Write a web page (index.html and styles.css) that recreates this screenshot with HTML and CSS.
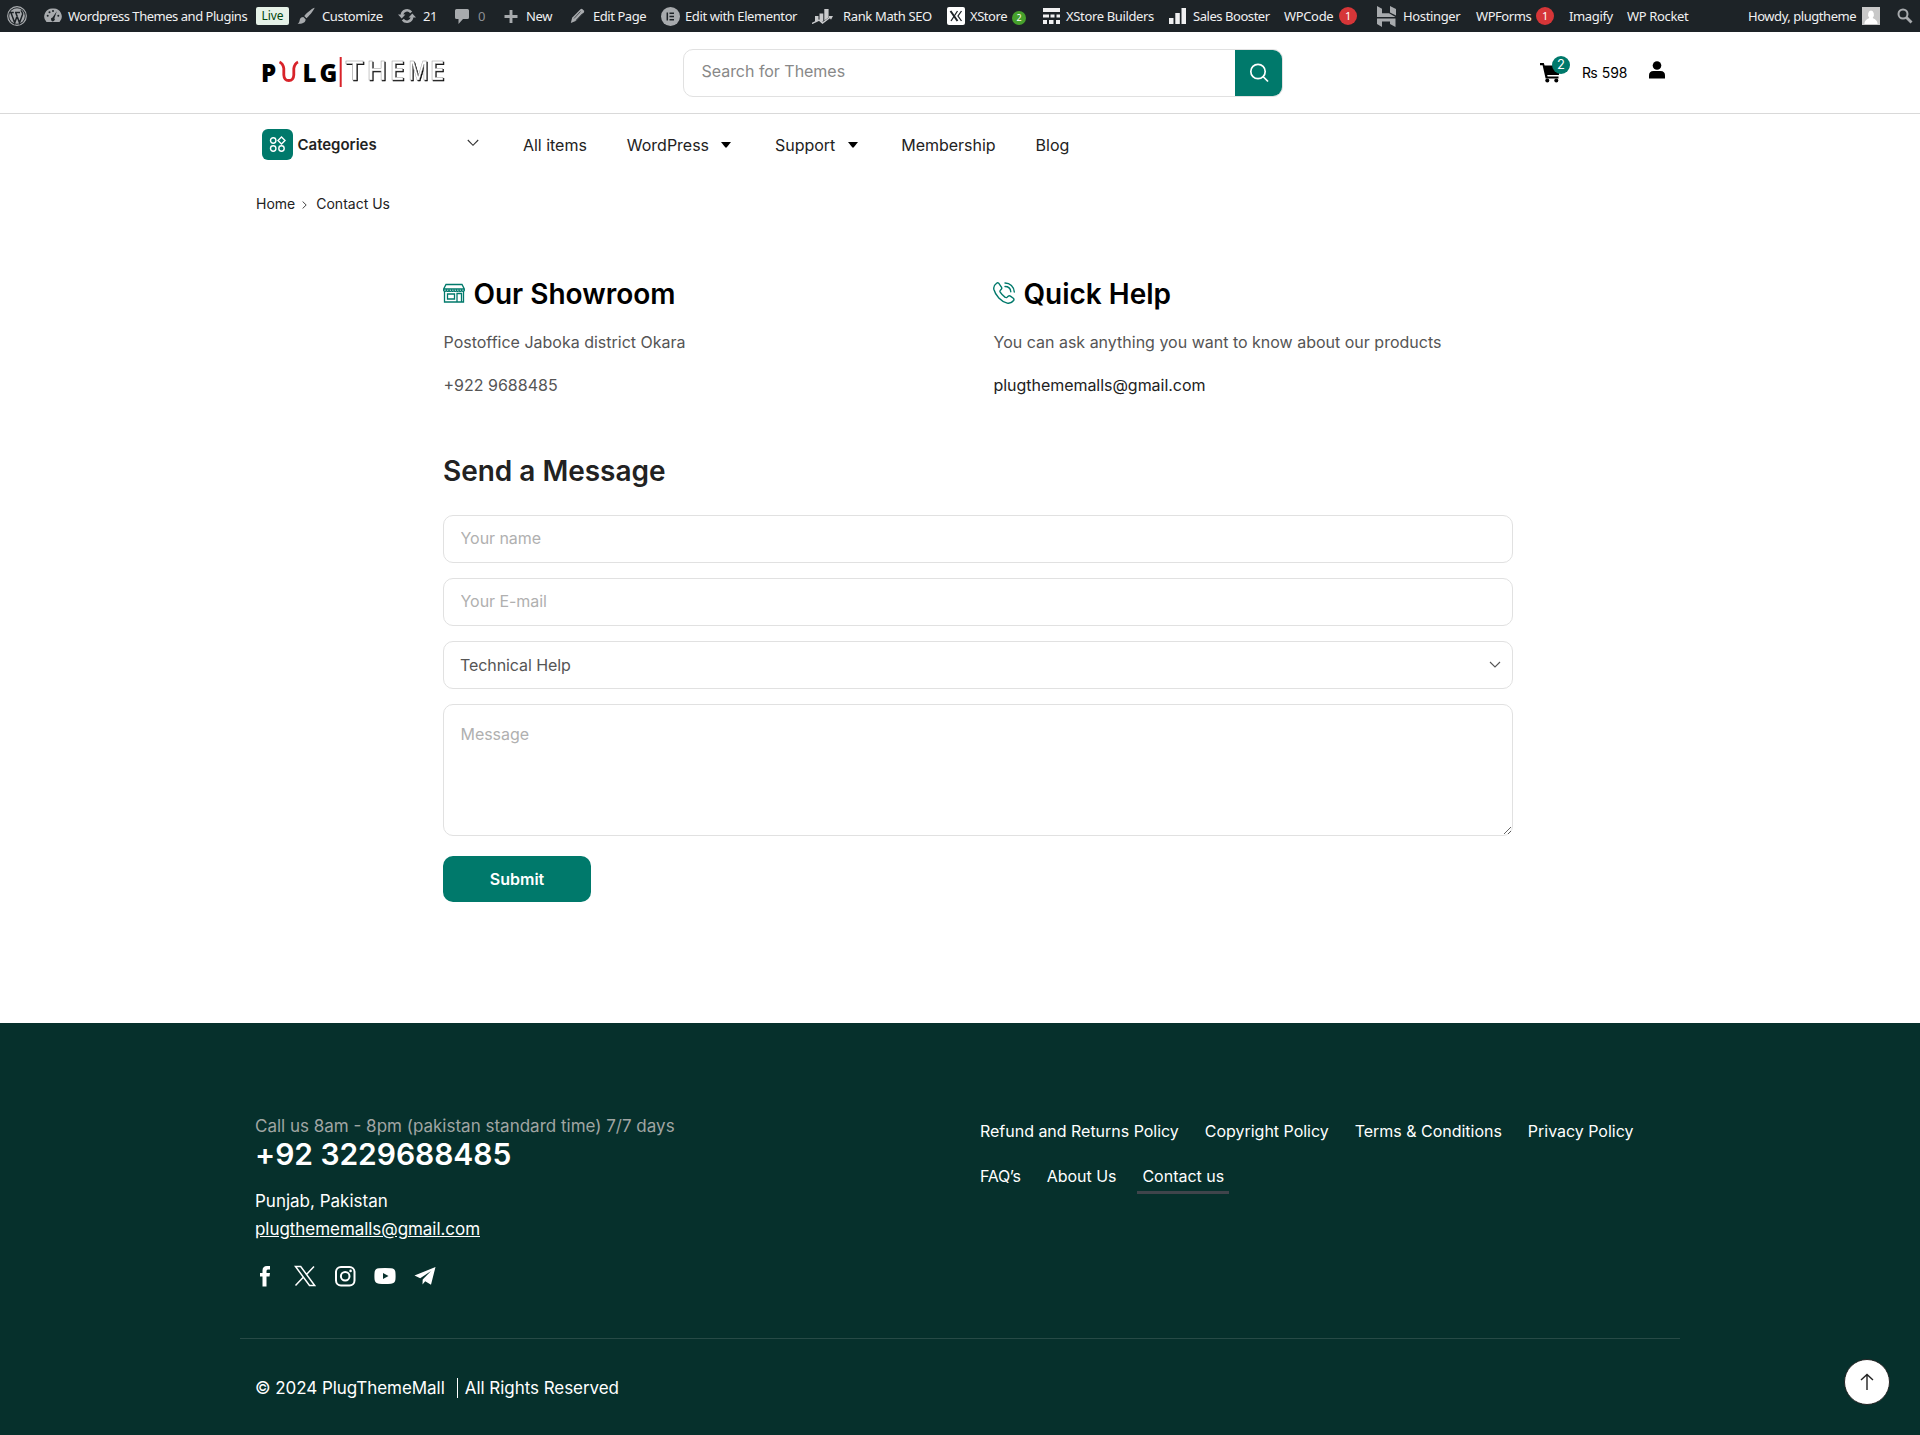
FILE: index.html
```html
<!DOCTYPE html>
<html lang="en">
<head>
<meta charset="utf-8">
<title>Contact Us</title>
<link rel="stylesheet" href="styles.css">
</head>
<body>
<ul class="adminbar">
  <li class="ab ab-wp"><svg width="20" height="20" viewBox="0 0 20 20"><circle cx="10" cy="10" r="9.3" fill="none" stroke="#a7aaad" stroke-width="1.2"/><circle cx="10" cy="10" r="7.8" fill="#a7aaad"/><path d="M2.6 6.6h4.2M8 6.6h5M4 6.8l3.7 10L10.3 9.500M8.800 6.800l3.700 10L15.500 8.500c.6-1.800-1-2.500-1.400-4.200" fill="none" stroke="#1d2327" stroke-width="1.500"/></svg></li>
  <li class="ab ab-site"><svg width="18" height="18" viewBox="0 0 18 18"><path d="M9 1.500A8 8 0 0 0 2.500 15h13A8 8 0 0 0 9 1.500z" fill="#a7aaad"/><g fill="#1d2327"><circle cx="9" cy="4" r="1"/><circle cx="5.500" cy="5.300" r="1"/><circle cx="3.700" cy="8.800" r="1"/><circle cx="14.300" cy="8.800" r="1"/><path d="M12.800 4.300L10.400 11.200a1.900 1.900 0 1 1-1.900-.7z"/></g></svg><span>Wordpress Themes and Plugins</span><b class="live">Live</b></li>
  <li class="ab ab-custom"><svg width="18" height="18" viewBox="0 0 18 18"><path d="M17.500.8c.5.500-3.700 6.800-8 10.500L7.200 9C10.500 5 17 .3 17.500.8zM6.300 9.900l2.300 2.300c.3 3-3 5-8 4.500 2.200-1 1.600-2.500 2.400-4.700.6-1.500 2-2.200 3.300-2.100z" fill="#a7aaad"/></svg><span>Customize</span></li>
  <li class="ab ab-upd"><svg width="18" height="16" viewBox="0 0 18 16"><path d="M3.900 7a5.200 5.200 0 0 1 9.300-2.600M14.100 9a5.200 5.200 0 0 1-9.300 2.600" fill="none" stroke="#a7aaad" stroke-width="2.600"/><path d="M0 6.500h7.400L3.700 10.500zM18 9.500h-7.400l3.700-4z" fill="#a7aaad"/></svg><span>21</span></li>
  <li class="ab ab-com"><svg width="14" height="16" viewBox="0 0 14 16"><path d="M1.500 1h11q1.500 0 1.500 1.500v7q0 1.500-1.500 1.500H8l-4.500 5V11h-2Q0 11 0 9.500v-7Q0 1 1.500 1z" fill="#a7aaad"/></svg><span class="dim">0</span></li>
  <li class="ab ab-new"><svg width="14" height="14" viewBox="0 0 14 14"><path d="M7 1v13M.5 7.500h13" stroke="#a7aaad" stroke-width="2.900"/></svg><span>New</span></li>
  <li class="ab ab-edit"><svg width="15" height="16" viewBox="0 0 15 16"><path d="M10.500 1.200q1-.8 2 .1l1.300 1.300q.9 1 0 2L5.700 13 .8 15l1.300-5.200z" fill="#a7aaad"/><path d="M4 10.500l6.500-7M6 12.300L12.500 5.500" stroke="#1d2327" stroke-width=".7"/></svg><span>Edit Page</span></li>
  <li class="ab ab-elem"><svg width="19" height="19" viewBox="0 0 19 19"><circle cx="9.500" cy="9.500" r="9.500" fill="#a7aaad"/><path d="M6.300 5.500v8M8.500 6.200h4.500M8.500 9.500h4.500M8.500 12.800h4.500" stroke="#1d2327" stroke-width="1.500"/></svg><span>Edit with Elementor</span></li>
  <li class="ab ab-rank"><svg width="21" height="16" viewBox="0 0 21 16"><path d="M3 8h3.500v4.500L3 14zM7.500 5.500h3.800V13L9.500 14.500l-2-2zM12.300 1h4.300v8.500l-4.300 3z" fill="#c9cacc"/><path d="M0 15.500l7-3.500 3.500 3 8-6" fill="none" stroke="#c9cacc" stroke-width="1.400"/><path d="M16.500 8H21l-2 3.800z" fill="#c9cacc"/></svg><span>Rank Math SEO</span></li>
  <li class="ab ab-xs"><svg width="18" height="18" viewBox="0 0 18 18"><rect width="18" height="18" rx="2" fill="#fff"/><path d="M3.500 4l7 10" stroke="#1d2327" stroke-width="2"/><path d="M10.500 4L4 14M14.500 4l-3.500 5 3.500 5" fill="none" stroke="#1d2327" stroke-width="1.300"/></svg><span>XStore</span><b class="count green">2</b></li>
  <li class="ab ab-xb"><svg width="17" height="16" viewBox="0 0 17 16" fill="#f0f0f1"><path d="M0 0h17v4H0zM0 6.500h6v3H0zM7.500 6.500h4v3h-4zM13.500 6.500H17v3h-3.500zM0 12h4v4H0zM6 12h4.500v4H6zM13 12h4v4h-4z"/></svg><span>XStore Builders</span></li>
  <li class="ab ab-sb"><svg width="17" height="16" viewBox="0 0 17 16" fill="#f0f0f1"><path d="M0 10h4.500v6H0zM6.300 5h4.500v11H6.300zM12.500 0H17v16h-4.500z"/></svg><span>Sales Booster</span></li>
  <li class="ab ab-wpc"><span>WPCode</span><b class="count">1</b></li>
  <li class="ab ab-host"><svg width="19" height="21" viewBox="0 0 19 21" fill="#a7aaad"><path d="M0 0l5 2.800v4.500h7L18.500 11H0zM13 0l6 3v6.500l-6-3zM0 12.500h18.500V21L13 18v-2.500H5V21l-5-3z"/></svg><span>Hostinger</span></li>
  <li class="ab ab-wpf"><span>WPForms</span><b class="count">1</b></li>
  <li class="ab ab-img"><span>Imagify</span></li>
  <li class="ab ab-rocket"><span>WP Rocket</span></li>
  <li class="ab ab-user"><span>Howdy, plugtheme</span><svg width="18" height="18" viewBox="0 0 18 18"><rect width="18" height="18" fill="#c8c8c8"/><path d="M9 3.500a3.300 4 0 0 1 1.800 7c0 1.500 4.200 1.500 4.700 5.500v1h-13v-1C3 12 7.200 12 7.200 10.500A3.300 4 0 0 1 9 3.500z" fill="#fff"/></svg></li>
  <li class="ab ab-find"><svg width="16" height="16" viewBox="0 0 16 16" fill="none" stroke="#a7aaad"><circle cx="6" cy="6" r="4.500" stroke-width="2"/><path d="M9 9l5.500 5.500" stroke-width="2.800"/></svg></li>
</ul>

<header class="header">
  <svg class="logo" width="184" height="34" viewBox="0 0 184 34">
    <text class="logo-a" y="26" x="0 41.500 58.500">PLG</text>
    <path d="M18.500 6q3.500 1.500 4.300 6.500V19q.3 5.500 5 5.500t5-5.500v-6.500Q33.700 7.500 37 6" fill="none" stroke="#d8232a" stroke-width="2.800"/>
    <path d="M79.700 1v30" stroke="#d8232a" stroke-width="2"/>
    <g class="logo-b">
      <text x="84.500" y="24" textLength="18" lengthAdjust="spacingAndGlyphs">T</text>
      <text x="105.500" y="24">H</text>
      <text x="128.500" y="24">E</text>
      <text x="147" y="24" textLength="20.500" lengthAdjust="spacingAndGlyphs">M</text>
      <text x="168.500" y="24">E</text>
    </g>
  </svg>
  <div class="search"><span>Search for Themes</span><button class="search-btn"><svg width="20" height="20" viewBox="0 0 20 20" fill="none" stroke="#fff" stroke-width="1.700"><circle cx="9" cy="8.500" r="7.200"/><path d="M14 13.500l5 5"/></svg></button></div>
  <div class="tools">
    <div class="cart"><svg width="21" height="20" viewBox="0 0 21 20"><path d="M0 0h3.800l.8 2.500H20.500L18.900 12H7.200l.4 1.500H18.500v2H5.600L2.600 2.300H0z"/><circle cx="7.300" cy="17.600" r="2"/><circle cx="16.300" cy="17.600" r="2"/></svg><b>2</b></div>
    <span class="total">₨ 598</span>
    <svg class="user" width="16" height="18" viewBox="0 0 16 18"><circle cx="8" cy="4.500" r="4.300"/><path d="M0 17.500v-3Q0 10 4.500 10h7q4.500 0 4.500 4.500v3z"/></svg>
  </div>
</header>

<nav class="nav">
  <div class="cats"><i><svg width="17" height="17" viewBox="0 0 17 17" fill="none" stroke="#fff" stroke-width="1.400"><circle cx="4.200" cy="4.500" r="2.700"/><path d="M12.500 1l3.500 3.500L12.500 8 9 4.500z"/><circle cx="4.200" cy="12.500" r="2.700"/><circle cx="12.500" cy="12.500" r="2.700"/></svg></i><b>Categories</b><svg class="chev" width="12" height="8" viewBox="0 0 12 8"><path d="M.8 1L6 6.300 11.200 1" fill="none" stroke="#333" stroke-width="1.100"/></svg></div>
  <a>All items</a>
  <a>WordPress<svg width="10" height="6" viewBox="0 0 10 6"><path d="M0 0h10L5.800 5.300q-.8.700-1.600 0z"/></svg></a>
  <a>Support<svg width="10" height="6" viewBox="0 0 10 6"><path d="M0 0h10L5.800 5.300q-.8.700-1.600 0z"/></svg></a>
  <a>Membership</a>
  <a>Blog</a>
</nav>
<div class="crumbs"><span>Home</span><svg width="5" height="8" viewBox="0 0 5 8"><path d="M.6.500L4.200 4 .6 7.500" fill="none" stroke="#444"/></svg><span>Contact Us</span></div>

<main class="main">
  <div class="info">
    <section>
      <h2><svg width="22" height="22" viewBox="0 0 22 22" fill="none" stroke="#00796b" stroke-width="1.300"><path d="M3 2.500h16l2.300 4.500v1.500q-1.300 1.800-2.700 0-1.300 1.800-2.600 0-1.200 1.800-2.500 0-1.200 1.800-2.500 0-1.200 1.800-2.500 0-1.200 1.800-2.500 0-1.300 1.800-2.600 0-1.400 1.800-2.700 0V7zM.7 7h20.600M1.500 9.500v10.500h19V9.500M4.500 12h7v5h-7zM14 20v-8.500h4.500V20"/></svg>Our Showroom</h2>
      <p>Postoffice Jaboka district Okara</p>
      <p>+922 9688485</p>
    </section>
    <section>
      <h2><svg width="22" height="22" viewBox="0 0 22 22" fill="none" stroke="#00796b" stroke-width="1.400" stroke-linecap="round"><path d="M5.700 1.200Q4.700.4 3.600 1.200C1.300 2.800.2 4.500.9 7.500 2.500 13.500 8 19.500 14.200 21.100c3 .7 4.800-.5 6.400-2.600q.8-1.200-.3-2.200l-2.900-2.200q-1.200-.8-2.200.1l-1.200 1.100q-.8.700-1.800 0c-2-1.300-3.800-3.200-5-5.100q-.6-1 .1-1.800l1-1.100q.9-1 .1-2.200zM12 1c5 0 9 3.500 9.300 9M12 4.500c3.300 0 5.500 2 5.800 5.300"/></svg>Quick Help</h2>
      <p>You can ask anything you want to know about our products</p>
      <p class="dark">plugthememalls@gmail.com</p>
    </section>
  </div>
  <h2 class="send">Send a Message</h2>
  <form class="form">
    <input class="field" placeholder="Your name">
    <input class="field" placeholder="Your E-mail">
    <div class="field select"><span>Technical Help</span><svg width="12" height="8" viewBox="0 0 12 8"><path d="M1 1l5 5 5-5" fill="none" stroke="#555" stroke-width="1.100"/></svg></div>
    <textarea class="field area" placeholder="Message"></textarea>
    <button class="submit" type="button">Submit</button>
  </form>
</main>

<footer class="footer">
  <div class="cols">
    <div class="contact">
      <p class="call">Call us 8am - 8pm (pakistan standard time) 7/7 days</p>
      <p class="phone">+92 3229688485</p>
      <p class="addr">Punjab, Pakistan</p>
      <p class="addr mail"><a>plugthememalls@gmail.com</a></p>
      <div class="social">
        <svg viewBox="0 0 22 22"><path d="M8.500 21.500v-10H6V8h2.500V5.500Q8.500 1 13 1h3v3.500h-2.200q-1.300 0-1.300 1.500v2H16l-.5 3.500h-3v10z" fill="#fff"/></svg>
        <svg viewBox="0 0 22 22"><path d="M1.500 1.500h5.200l14 19h-5.200zM20 1.500l-8 8.500M1.500 20.500L9.500 12" fill="none" stroke="#fff" stroke-width="1.500"/></svg>
        <svg viewBox="0 0 22 22"><rect x="2" y="2" width="18.500" height="18.500" rx="5" fill="none" stroke="#fff" stroke-width="2"/><circle cx="11.200" cy="11.200" r="4.300" fill="none" stroke="#fff" stroke-width="2"/><circle cx="16.600" cy="5.900" r="1.300" fill="#fff"/></svg>
        <svg viewBox="0 0 22 22"><path d="M5 3.300q6-.7 12 0 4.200.2 4.400 4 .4 4 0 7.500-.3 3.600-4.400 4-6 .5-12 0-4-.4-4.400-4-.4-3.500 0-7.500.3-3.800 4.400-4z" fill="#fff"/><path d="M9 8l5.500 3L9 14z" fill="#06302c"/></svg>
        <svg viewBox="0 0 22 22"><path d="M21.500 2L.5 10.500l5.700 2.700L17 6l-8.300 8.500-.2 5 2.700-3.300 5.800 3.600z" fill="#fff"/></svg>
      </div>
    </div>
    <div class="links">
      <a>Refund and Returns Policy</a><a>Copyright Policy</a><a>Terms &amp; Conditions</a><a>Privacy Policy</a><a class="faq">FAQ’s</a><a>About Us</a><a class="active">Contact us</a>
    </div>
  </div>
  <div class="copy"><span>© 2024 PlugThemeMall</span><i></i><span>All Rights Reserved</span></div>
</footer>
<a class="totop"><svg width="14" height="18" viewBox="0 0 14 18" fill="none" stroke="#222" stroke-width="1.400"><path d="M7 17V1.500M1 7l6-5.500L13 7"/></svg></a>
</body>
</html>
```
FILE: styles.css
```css
* { box-sizing: border-box; }
body { margin: 0; background: #fff; color: #222; font: 16px/26px Inter, "Liberation Sans", sans-serif; height: 1435px; }
h2, p, ul { margin: 0; padding: 0; }
svg { display: block; flex: none; }

/* admin bar */
.adminbar { display: flex; height: 32px; padding-left: 7px; background: #1d2327; list-style: none; color: #f0f0f1; font: 13px/32px "Noto Sans", "Open Sans", sans-serif; letter-spacing: -.35px; white-space: nowrap; }
.ab { display: flex; align-items: center; flex: none; gap: 7px; height: 32px; }
.ab b { font-weight: 400; letter-spacing: 0; }
.ab-wp { width: 37px; }
.ab-site { width: 253px; gap: 6px; letter-spacing: -.47px; }
.live { width: 33px; height: 18px; margin-left: auto; margin-right: 8px; border-radius: 2px; background: #e6f2e8; color: #00450c; font-size: 12px; line-height: 18px; text-align: center; }
.ab-custom { width: 101px; }
.ab-upd { width: 57px; }
.ab-com { width: 49px; gap: 9px; }
.dim { color: #8c8f94; }
.ab-new { width: 66px; gap: 8px; }
.ab-edit { width: 91px; gap: 8px; letter-spacing: -.45px; }
.ab-elem { width: 151px; gap: 5px; letter-spacing: -.4px; }
.ab-rank { width: 135px; gap: 10px; }
.ab-xs { width: 96px; gap: 5px; letter-spacing: -.45px; }
.ab-xb { width: 126px; gap: 6px; }
.ab-sb { width: 115px; letter-spacing: -.45px; }
.ab-wpc { width: 93px; gap: 6px; }
.ab-host { width: 99px; }
.ab-wpf { width: 93px; gap: 5px; letter-spacing: -.45px; }
.ab-img { width: 58px; }
.ab-rocket { width: 121px; }
.ab-user { width: 149px; gap: 6px; letter-spacing: -.45px; }
.count { width: 18px; height: 18px; border-radius: 9px; background: #d63638; color: #fff; font-size: 11px; line-height: 18px; text-align: center; }
.count.green { width: 14px; height: 14px; margin-top: 4px; background: #46a02c; font-size: 9px; line-height: 14px; }

/* header */
.header { display: flex; align-items: flex-start; height: 82px; padding-left: 261px; border-bottom: 1px solid #d9d9d9; }
.logo { width: 184px; height: 34px; margin: 24px 238px 0 0; overflow: visible; }
.logo-a { font: 800 24px "Open Sans", sans-serif; }
.logo-b { font: 600 27px "Open Sans", sans-serif; fill: #fff; stroke: #999; stroke-width: .5px; filter: drop-shadow(1.3px 1px 0 #000); }
.search { display: flex; justify-content: space-between; width: 600px; height: 48px; margin-top: 17px; padding-left: 17.500px; border: 1px solid #e1e1e1; border-radius: 10px; overflow: hidden; color: #888; line-height: 43px; letter-spacing: -.03px; }
.search-btn { display: grid; place-items: center; width: 47px; height: 46px; padding: 0; border: 0; background: #00796b; }
.tools { display: flex; margin-left: 257px; }
.cart { position: relative; width: 42px; padding-top: 31px; }
.cart b { position: absolute; left: 12px; top: 24px; width: 18px; height: 18px; border-radius: 50%; background: #00796b; color: #fff; font-weight: 400; font-size: 13px; line-height: 17px; text-align: center; }
.total { width: 67px; padding-top: 28px; color: #000; font-size: 14px; }
.user { margin-top: 29px; }

/* navigation */
.nav { display: flex; align-items: center; height: 62px; padding-left: 262px; color: #222; }
.cats { display: flex; align-items: center; width: 261px; }
.cats i { display: grid; place-items: center; width: 31px; height: 31px; margin: -1px 4.5px 0 0; border-radius: 6px; background: #00796b; }
.cats b { width: 169.500px; font-size: 15px; font-weight: 600; letter-spacing: -.02px; }
.chev { margin-top: -4px; }
.nav a { display: flex; align-items: center; gap: 12.500px; margin-right: 40px; font-size: 16px; letter-spacing: -.02px; }
.nav a svg { margin-right: 3.500px; }
.crumbs { display: flex; align-items: center; height: 56px; padding-left: 256px; gap: 7px; font-size: 14px; }
.crumbs svg { margin: 2px 2px 0 0; }

/* contact content */
.main { width: 1070px; height: 791px; margin-left: 443px; padding-top: 43px; }
.info { display: grid; grid-template-columns: 550px 1fr; color: #555; }
h2 { display: flex; align-items: center; gap: 8.500px; color: #000; font-size: 28px; line-height: 37px; font-weight: 600; letter-spacing: -.02px; padding-top: 1px; }
h2 svg { margin-top: -3px; }
.info p { margin-top: 17px; padding-left: .500px; }
.info h2 + p { margin-top: 16px; }
.info .dark { color: #222; letter-spacing: -.04px; }
.send { margin: 54px 0 25px; color: #222; }
.form { display: grid; gap: 15px; }
.field { width: 1070px; height: 48px; padding: 0 16.500px 2px; border: 1px solid #e1e1e1; border-radius: 10px; background: #fff; color: #555; font: 16px/26px Inter, sans-serif; letter-spacing: -.05px; }
.field::placeholder { color: #b0b0b0; }
.select { display: flex; align-items: center; justify-content: space-between; padding: 0 11px 0 16px; letter-spacing: -.08px; }
.area { height: 132px; padding-top: 16px; }
.submit { width: 148px; height: 46px; margin-top: 5px; border: 0; border-radius: 10px; background: #00796b; color: #fff; font: 600 16px Inter, sans-serif; }

/* footer */
.footer { height: 412px; padding: 0 240px; background: #06302c; color: #fff; }
.cols { display: grid; grid-template-columns: 724px 1fr; height: 316px; padding-left: 15px; border-bottom: 1px solid #274a46; }
.contact { padding-top: 90px; font-size: 17px; }
.call { color: #a0a5a3; }
.phone { margin-bottom: 18px; font-size: 30px; line-height: 30px; font-weight: 600; letter-spacing: -.05px; }
.addr { line-height: 28px; }
.mail a { text-decoration: underline; letter-spacing: -.05px; }
.social { display: flex; gap: 18px; margin: 22px 0 0 -1px; }
.social svg { width: 22px; height: 22px; }
.links { display: flex; flex-wrap: wrap; align-content: flex-start; gap: 0 26px; padding: 86px 0 0 1px; letter-spacing: -.02px; }
.links a { line-height: 45px; }
.links .faq { letter-spacing: -.3px; }
.links .active { position: relative; }
.active::after { content: ""; position: absolute; left: -5px; right: -5px; bottom: 5px; height: 3px; background: #3f444b; }
.copy { display: flex; align-items: center; height: 97px; padding-left: 15px; font-size: 17px; letter-spacing: -.05px; }
.copy i { width: 1px; height: 20px; margin: 0 7px 0 12px; background: #fff; }
.totop { position: fixed; right: 30px; bottom: 30px; display: grid; place-items: center; width: 46px; height: 46px; border: 1px solid #222; border-radius: 50%; background: #fff; }
```
